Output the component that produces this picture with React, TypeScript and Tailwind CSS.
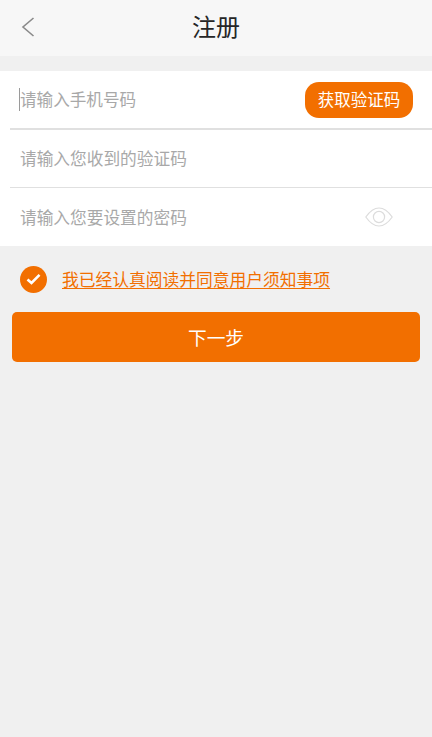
export default function App() {
  return (
    <div className="min-h-[737px] bg-[#f0f0f0] font-['Noto_Sans_CJK_SC','Noto_Sans',sans-serif]">
      <header className="h-14 bg-[#f7f7f7] flex items-center justify-center relative">
        <svg className="absolute left-[20px] top-[16px]" width="16" height="22" viewBox="0 0 16 22" fill="none" stroke="#8a8a8a" strokeWidth="1.6">
          <path d="M13.5 2 L3 11 L13.5 20" />
        </svg>
        <h1 className="text-[24px] leading-none text-[#262626] pb-1">注册</h1>
      </header>
      <section className="mt-[15px] bg-white">
        <div className="h-[57px] flex items-center pl-5 pr-[19px] relative">
          <span className="absolute left-[19px] top-[17px] w-px h-[23px] bg-[#9a9a9a]" />
          <span className="text-[16.6px] text-[#a8a8a8]">请输入手机号码</span>
          <button className="ml-auto w-[108px] h-9 rounded-[14px] bg-[#f26f00] text-white text-[16.5px] leading-none">获取验证码</button>
        </div>
        <div className="ml-2.5 h-0.5 bg-[#e0e0e0]" />
        <div className="h-[57px] flex items-center pl-5">
          <span className="text-[16.7px] text-[#a8a8a8]">请输入您收到的验证码</span>
        </div>
        <div className="ml-2.5 h-px bg-[#e0e0e0]" />
        <div className="h-[58px] flex items-center pl-5 pr-[39px]">
          <span className="text-[16.7px] text-[#a8a8a8] pt-px">请输入您要设置的密码</span>
          <svg className="ml-auto" width="28" height="20" viewBox="0 0 28 20" fill="none" stroke="#dcdcdc" strokeWidth="1.2">
            <path d="M0.8 10 C5 4 9.5 1 14 1 C18.5 1 23 4 27.2 10 C23 16 18.5 19 14 19 C9.5 19 5 16 0.8 10 Z" />
            <circle cx="14" cy="10" r="5.6" />
          </svg>
        </div>
      </section>
      <div className="h-[66px] flex items-center pl-5">
        <span className="w-[27px] h-[27px] rounded-full bg-[#f26f00] flex items-center justify-center">
          <svg width="15" height="12" viewBox="0 0 15 12" fill="none" stroke="white" strokeWidth="2.6">
            <path d="M1.5 6.5 L5.5 10 L13.5 1.8" />
          </svg>
        </span>
        <a className="ml-[15px] text-[16.75px] leading-none text-[#f26f00] underline underline-offset-2">我已经认真阅读并同意用户须知事项</a>
      </div>
      <button className="mx-3 w-[408px] h-[50px] block rounded-[5px] bg-[#f26f00] text-white text-[18.7px]">下一步</button>
    </div>
  );
}
